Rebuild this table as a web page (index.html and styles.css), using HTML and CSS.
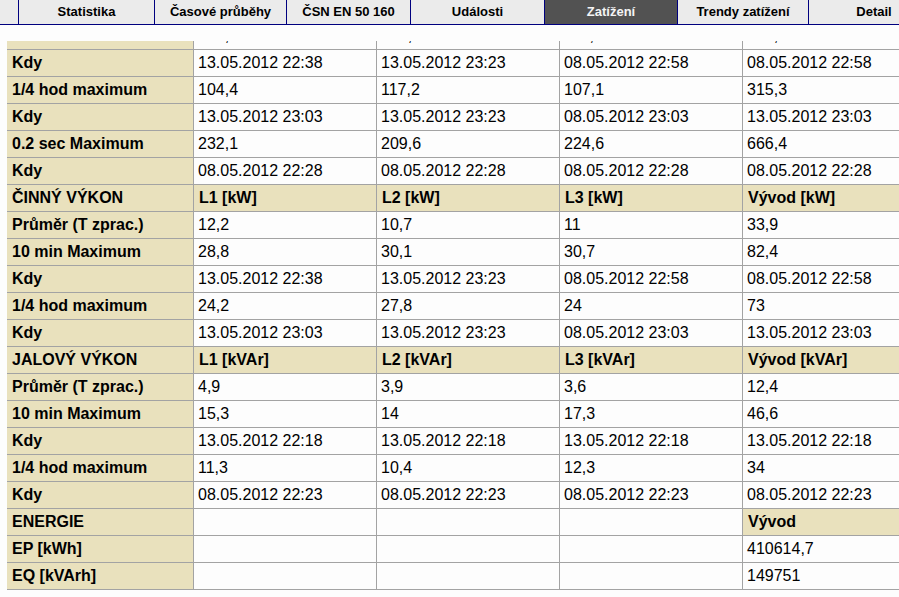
FILE: index.html
```html
<!DOCTYPE html>
<html lang="cs">
<head>
    <meta charset="UTF-8">
    <title>Zatížení</title>
    <link rel="stylesheet" href="styles.css">
</head>
<body>
    <div class="tabs">
        <div class="tab tab-cut"></div>
        <div class="tab w136">Statistika</div>
        <div class="tab w132">Časové průběhy</div>
        <div class="tab w124">ČSN EN 50 160</div>
        <div class="tab w134">Události</div>
        <div class="tab w133 active">Zatížení</div>
        <div class="tab w131">Trendy zatížení</div>
        <div class="tab w131">Detail</div>
    </div>

    <div class="content">
        <div class="table-wrap">
            <table class="load">
                <colgroup>
                    <col class="c-label">
                    <col class="c-val">
                    <col class="c-val">
                    <col class="c-val">
                    <col class="c-val">
                </colgroup>
                <tr><th>10 min Maximum</th><td>108,5</td><td>121,3</td><td>112,9</td><td>331,6</td></tr>
                <tr><th>Kdy</th><td>13.05.2012 22:38</td><td>13.05.2012 23:23</td><td>08.05.2012 22:58</td><td>08.05.2012 22:58</td></tr>
                <tr><th>1/4 hod maximum</th><td>104,4</td><td>117,2</td><td>107,1</td><td>315,3</td></tr>
                <tr><th>Kdy</th><td>13.05.2012 23:03</td><td>13.05.2012 23:23</td><td>08.05.2012 23:03</td><td>13.05.2012 23:03</td></tr>
                <tr><th>0.2 sec Maximum</th><td>232,1</td><td>209,6</td><td>224,6</td><td>666,4</td></tr>
                <tr><th>Kdy</th><td>08.05.2012 22:28</td><td>08.05.2012 22:28</td><td>08.05.2012 22:28</td><td>08.05.2012 22:28</td></tr>

                <tr class="head"><th>ČINNÝ VÝKON</th><th>L1 [kW]</th><th>L2 [kW]</th><th>L3 [kW]</th><th>Vývod [kW]</th></tr>
                <tr><th>Průměr (T zprac.)</th><td>12,2</td><td>10,7</td><td>11</td><td>33,9</td></tr>
                <tr><th>10 min Maximum</th><td>28,8</td><td>30,1</td><td>30,7</td><td>82,4</td></tr>
                <tr><th>Kdy</th><td>13.05.2012 22:38</td><td>13.05.2012 23:23</td><td>08.05.2012 22:58</td><td>08.05.2012 22:58</td></tr>
                <tr><th>1/4 hod maximum</th><td>24,2</td><td>27,8</td><td>24</td><td>73</td></tr>
                <tr><th>Kdy</th><td>13.05.2012 23:03</td><td>13.05.2012 23:23</td><td>08.05.2012 23:03</td><td>13.05.2012 23:03</td></tr>

                <tr class="head"><th>JALOVÝ VÝKON</th><th>L1 [kVAr]</th><th>L2 [kVAr]</th><th>L3 [kVAr]</th><th>Vývod [kVAr]</th></tr>
                <tr><th>Průměr (T zprac.)</th><td>4,9</td><td>3,9</td><td>3,6</td><td>12,4</td></tr>
                <tr><th>10 min Maximum</th><td>15,3</td><td>14</td><td>17,3</td><td>46,6</td></tr>
                <tr><th>Kdy</th><td>13.05.2012 22:18</td><td>13.05.2012 22:18</td><td>13.05.2012 22:18</td><td>13.05.2012 22:18</td></tr>
                <tr><th>1/4 hod maximum</th><td>11,3</td><td>10,4</td><td>12,3</td><td>34</td></tr>
                <tr><th>Kdy</th><td>08.05.2012 22:23</td><td>08.05.2012 22:23</td><td>08.05.2012 22:23</td><td>08.05.2012 22:23</td></tr>

                <tr><th>ENERGIE</th><td></td><td></td><td></td><th>Vývod</th></tr>
                <tr><th>EP [kWh]</th><td></td><td></td><td></td><td>410614,7</td></tr>
                <tr><th>EQ [kVArh]</th><td></td><td></td><td></td><td>149751</td></tr>
            </table>
        </div>
    </div>
</body>
</html>
```

FILE: styles.css
```css
* {
    box-sizing: border-box;
}

body {
    margin: 0;
    width: 899px;
    height: 597px;
    overflow: hidden;
    background: #fdfdfd;
    color: #000;
    font-family: "Liberation Sans", Arial, sans-serif;
}

/* tab bar */
.tabs {
    display: flex;
    height: 25px;
    background: #ebebeb;
    border-bottom: 1px solid #00007f;
    white-space: nowrap;
}

.tab {
    flex: none;
    height: 24px;
    line-height: 24px;
    border-right: 1px solid #00007f;
    text-align: center;
    font-size: 13px;
    font-weight: bold;
    color: #000;
}

.tab-cut { width: 19px; }
.w124 { width: 124px; }
.w131 { width: 131px; }
.w132 { width: 132px; }
.w133 { width: 133px; }
.w134 { width: 134px; }
.w136 { width: 136px; }

.tab.active {
    background: #525252;
    color: #f4f4f4;
}

/* table, scrolled so the first row is almost out of view */
.content {
    padding: 16px 0 0 7px;
}

.table-wrap {
    overflow: hidden;
}

.load {
    margin-top: -18px;
    width: 919px;
    table-layout: fixed;
    border-collapse: separate;
    border-spacing: 0;
    font-size: 16px;
}

.c-label { width: 187px; }
.c-val { width: 183px; }

.load th,
.load td {
    padding: 4px 5px 4px 4px;
    line-height: 18px;
    height: 27px;
    text-align: left;
    white-space: nowrap;
    border-right: 1px solid #a3a3a3;
    border-bottom: 1px solid #a3a3a3;
}

.load th {
    background: #e9e1bd;
    font-weight: bold;
    padding-left: 5px;
}

.load td {
    font-weight: normal;
}
```
